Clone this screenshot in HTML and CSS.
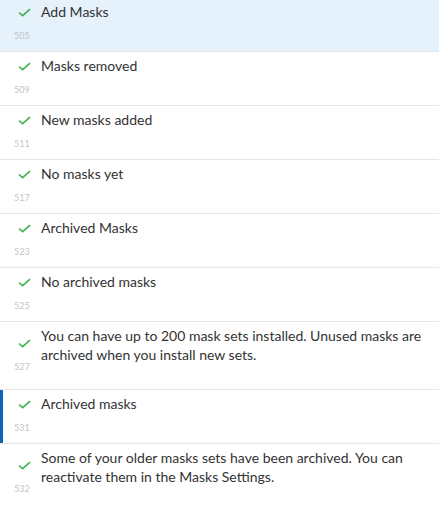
FILE: index.html
```html
<!DOCTYPE html>
<html>
<head>
<meta charset="utf-8">
<link rel="stylesheet" href="styles.css">
</head>
<body>
<div class="list">
  <div class="row selected">
    <div class="side"><svg class="check" viewBox="0 0 13 9"><path d="M1 4.5 L4.6 7.6 L12 1.2"/></svg><span class="num">505</span></div>
    <div class="title">Add Masks</div>
  </div>
  <div class="row">
    <div class="side"><svg class="check" viewBox="0 0 13 9"><path d="M1 4.5 L4.6 7.6 L12 1.2"/></svg><span class="num">509</span></div>
    <div class="title">Masks removed</div>
  </div>
  <div class="row">
    <div class="side"><svg class="check" viewBox="0 0 13 9"><path d="M1 4.5 L4.6 7.6 L12 1.2"/></svg><span class="num">511</span></div>
    <div class="title">New masks added</div>
  </div>
  <div class="row">
    <div class="side"><svg class="check" viewBox="0 0 13 9"><path d="M1 4.5 L4.6 7.6 L12 1.2"/></svg><span class="num">517</span></div>
    <div class="title">No masks yet</div>
  </div>
  <div class="row">
    <div class="side"><svg class="check" viewBox="0 0 13 9"><path d="M1 4.5 L4.6 7.6 L12 1.2"/></svg><span class="num">523</span></div>
    <div class="title">Archived Masks</div>
  </div>
  <div class="row">
    <div class="side"><svg class="check" viewBox="0 0 13 9"><path d="M1 4.5 L4.6 7.6 L12 1.2"/></svg><span class="num">525</span></div>
    <div class="title">No archived masks</div>
  </div>
  <div class="row">
    <div class="side"><svg class="check" viewBox="0 0 13 9"><path d="M1 4.5 L4.6 7.6 L12 1.2"/></svg><span class="num">527</span></div>
    <div class="title">You can have up to 200 mask sets installed. Unused masks are archived when you install new sets.</div>
  </div>
  <div class="row active">
    <div class="side"><svg class="check" viewBox="0 0 13 9"><path d="M1 4.5 L4.6 7.6 L12 1.2"/></svg><span class="num">531</span></div>
    <div class="title">Archived masks</div>
  </div>
  <div class="row">
    <div class="side"><svg class="check" viewBox="0 0 13 9"><path d="M1 4.5 L4.6 7.6 L12 1.2"/></svg><span class="num">532</span></div>
    <div class="title">Some of your older masks sets have been archived. You can reactivate them in the Masks Settings.</div>
  </div>
</div>
</body>
</html>
```

FILE: styles.css
```css
html, body {
  margin: 0;
  padding: 0;
  background: #ffffff;
  overflow: hidden;
}
body {
  font-family: Lato, "Open Sans", sans-serif;
  color: #333333;
}
.list {
  margin-top: -2px;
}
.row {
  display: flex;
  align-items: stretch;
  min-height: 53px;
  border-bottom: 1px solid #e6e6e6;
  position: relative;
}
.row.selected {
  background: #e5f1fb;
}
.row.active::before {
  content: "";
  position: absolute;
  left: 0;
  top: 0;
  bottom: 0;
  width: 3px;
  background: #0d63b5;
}
.side {
  width: 41px;
  flex: none;
  box-sizing: border-box;
  padding: 0 0 0 14px;
  display: flex;
  flex-direction: column;
  align-items: flex-start;
  justify-content: center;
}
.check {
  width: 13px;
  height: 9px;
  margin-left: 4px;
  fill: none;
  stroke: #3fb24f;
  stroke-width: 1.6;
}
.num {
  font-size: 9px;
  line-height: 11px;
  margin-top: 13px;
  color: #c4c4c4;
}
.title {
  flex: 1;
  font-size: 14px;
  line-height: 19px;
  padding: 4px 12px 25px 0;
}
```
